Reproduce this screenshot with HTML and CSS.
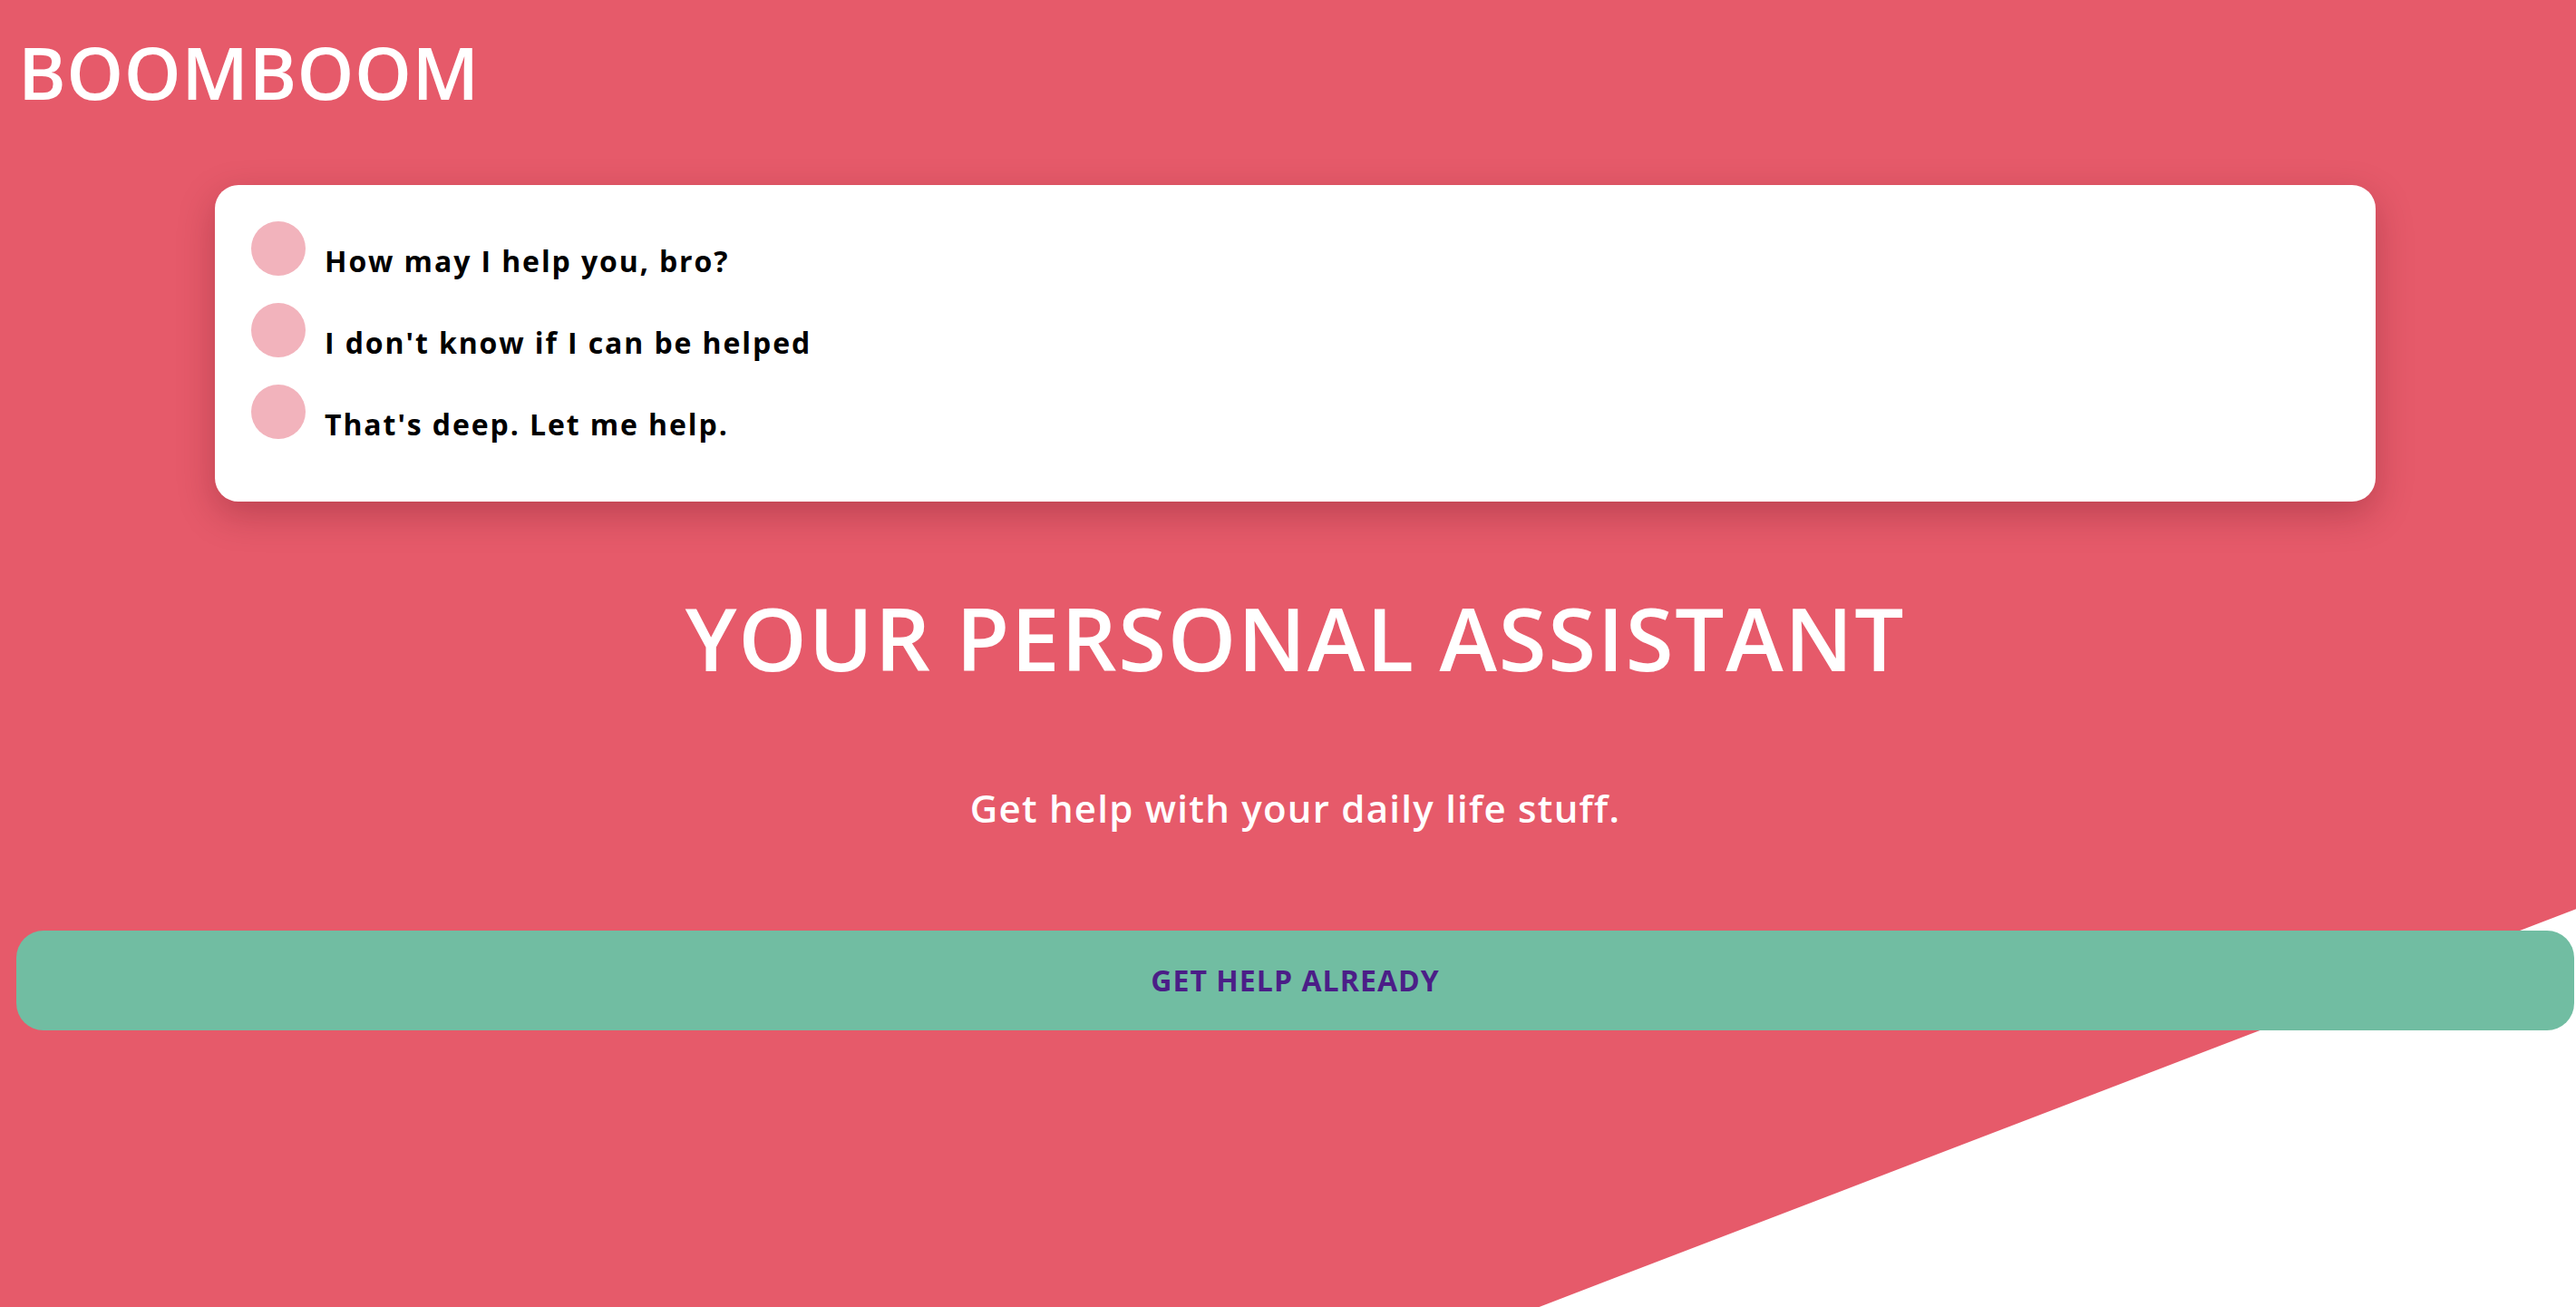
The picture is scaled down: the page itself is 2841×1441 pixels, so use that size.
FILE: index.html
```html
<!DOCTYPE html>
<html lang="en">
<head>
<meta charset="utf-8">
<title>BOOMBOOM</title>
<link rel="stylesheet" href="styles.css">
</head>
<body>
<section class="hero">
  <h1 class="logo">BOOMBOOM</h1>
  <div class="card">
    <div class="row"><span class="dot"></span><span class="msg">How may I help you, bro?</span></div>
    <div class="row"><span class="dot"></span><span class="msg">I don't know if I can be helped</span></div>
    <div class="row"><span class="dot"></span><span class="msg">That's deep. Let me help.</span></div>
  </div>
  <h2 class="title">YOUR PERSONAL ASSISTANT</h2>
  <p class="subtitle">Get help with your daily life stuff.</p>
  <button class="cta">GET HELP ALREADY</button>
</section>
</body>
</html>
```

FILE: styles.css
```css
* { box-sizing: border-box; }
html, body { margin: 0; padding: 0; }
body {
  background: #ffffff;
  font-family: "Open Sans", "Liberation Sans", sans-serif;
  overflow: hidden;
}
.hero {
  position: relative;
  height: 1441px;
  padding: 31px 0 0 16px;
  display: flex;
  flex-direction: column;
  isolation: isolate;
}
.hero::before {
  content: "";
  position: absolute;
  inset: 0;
  z-index: -1;
  background: #e65a6a;
  clip-path: polygon(0 0, 100% 0, 100% 69.55%, 59.75% 100%, 0 100%);
}
.logo {
  margin: 0 0 0 4px;
  font-size: 80px;
  line-height: 96px;
  font-weight: 600;
  color: #ffffff;
  letter-spacing: 0.5px;
}
.card {
  margin: 77px 0 0 221px;
  width: 2383px;
  background: #ffffff;
  border-radius: 26px;
  padding: 40px 40px 39px;
  box-shadow: 0 14px 40px rgba(80, 10, 20, 0.28);
}
.row {
  display: flex;
  align-items: flex-start;
  gap: 21px;
  height: 90px;
}
.dot {
  width: 60px;
  height: 60px;
  border-radius: 50%;
  background: #f2b3bc;
  flex: none;
}
.msg {
  margin-top: 24px;
  font-size: 32px;
  line-height: 40px;
  font-weight: 700;
  color: #000000;
  letter-spacing: 1.9px;
}
.title {
  margin: 92px 0 0;
  text-align: center;
  font-size: 96px;
  line-height: 116px;
  font-weight: 600;
  color: #ffffff;
  letter-spacing: 1.7px;
}
.subtitle {
  margin: 100px 0 0;
  text-align: center;
  font-size: 42px;
  line-height: 60px;
  font-weight: 600;
  color: #ffffff;
  letter-spacing: 1.25px;
}
.cta {
  margin: 105px 2px 0;
  height: 110px;
  border: none;
  border-radius: 30px;
  background: #71bda2;
  color: #4b1e87;
  font-family: "Open Sans", "Liberation Sans", sans-serif;
  font-size: 32px;
  line-height: 40px;
  font-weight: 700;
  letter-spacing: 1.05px;
  padding: 0;
}
```
